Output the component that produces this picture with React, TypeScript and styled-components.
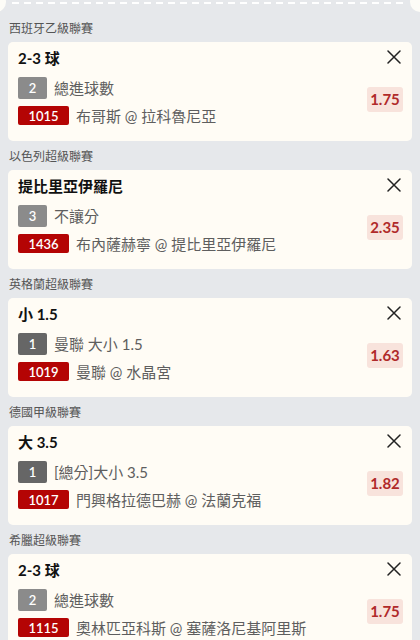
import React from "react";
import styled, { createGlobalStyle } from "styled-components";

const GlobalStyle = createGlobalStyle`
  html, body { margin: 0; padding: 0; background: #e6e8eb; }
  body { font-family: Lato, "Noto Sans CJK TC", sans-serif; }
  * { box-sizing: border-box; }
`;

const Page = styled.div`
  width: 420px;
  min-height: 640px;
  background: #e6e8eb;
  overflow: hidden;
`;

const Ticket = styled.div`
  position: relative;
  height: 11px;
  &::before, &::after {
    content: "";
    position: absolute;
    width: 20px;
    height: 20px;
    border-radius: 50%;
    background: #fdfcf7;
    top: -10px;
  }
  &::before { left: -14px; }
  &::after { right: -10px; }
`;

const Dashes = styled.div`
  margin: 2px 12px 0 12px;
  height: 2px;
  background: repeating-linear-gradient(90deg, #ffffff 0 7px, transparent 7px 12px);
`;

const List = styled.div`
  padding: 0 8px;
`;

const League = styled.div`
  font-family: "Noto Sans CJK TC", sans-serif;
  font-size: 12px;
  line-height: 16px;
  color: #555;
  padding: 7px 0 6px 1px;
`;

const Card = styled.div`
  background: #fffcf5;
  border-radius: 5px;
  padding: 5px 9px 12px 10px;
  height: 99px;
`;

const Head = styled.div`
  display: flex;
  align-items: center;
  justify-content: space-between;
  height: 20px;
`;

const Title = styled.div`
  font-family: Lato, "Noto Sans CJK TC", sans-serif;
  font-weight: 700;
  font-size: 15px;
  color: #111;
`;

const Close = styled.button`
  border: 0;
  background: transparent;
  padding: 0;
  width: 16px;
  height: 16px;
  display: flex;
  align-items: center;
  justify-content: center;
  margin-right: 1px;
  margin-top: -1px;
`;

const Body = styled.div`
  display: flex;
  align-items: center;
  justify-content: space-between;
  margin-top: 9px;
`;

const Lines = styled.div`
  display: flex;
  flex-direction: column;
  gap: 7px;
`;

const Line = styled.div<{ $h: number }>`
  display: flex;
  align-items: center;
  gap: 7px;
  height: ${(p) => p.$h}px;
`;

const Badge = styled.span<{ $bg: string; $w: number; $h: number }>`
  display: inline-flex;
  align-items: center;
  justify-content: center;
  width: ${(p) => p.$w}px;
  height: ${(p) => p.$h}px;
  background: ${(p) => p.$bg};
  color: #fff;
  font-family: Lato, sans-serif;
  font-size: 13px;
  font-weight: 600;
  border-radius: 2px;
`;

const LineText = styled.span`
  font-family: Lato, "Noto Sans CJK TC", sans-serif;
  font-size: 15px;
  color: #5e5e5e;
  white-space: nowrap;
`;

const Odds = styled.div`
  width: 36px;
  height: 25px;
  border-radius: 3px;
  background: #f8e3dc;
  color: #b02a2a;
  font-family: Lato, sans-serif;
  font-weight: 700;
  font-size: 15px;
  display: flex;
  align-items: center;
  justify-content: center;
  margin-top: -3px;
`;

type Bet = {
  league: string;
  title: string;
  num: string;
  numColor: string;
  market: string;
  code: string;
  match: string;
  odds: string;
};

const bets: Bet[] = [
  { league: "西班牙乙級聯賽", title: "2-3 球", num: "2", numColor: "#8b8b8b", market: "總進球數", code: "1015", match: "布哥斯 @ 拉科魯尼亞", odds: "1.75" },
  { league: "以色列超級聯賽", title: "提比里亞伊羅尼", num: "3", numColor: "#8b8b8b", market: "不讓分", code: "1436", match: "布內薩赫寧 @ 提比里亞伊羅尼", odds: "2.35" },
  { league: "英格蘭超級聯賽", title: "小 1.5", num: "1", numColor: "#666666", market: "曼聯 大小 1.5", code: "1019", match: "曼聯 @ 水晶宮", odds: "1.63" },
  { league: "德國甲級聯賽", title: "大 3.5", num: "1", numColor: "#666666", market: "[總分]大小 3.5", code: "1017", match: "門興格拉德巴赫 @ 法蘭克福", odds: "1.82" },
  { league: "希臘超級聯賽", title: "2-3 球", num: "2", numColor: "#8b8b8b", market: "總進球數", code: "1115", match: "奧林匹亞科斯 @ 塞薩洛尼基阿里斯", odds: "1.75" },
];

const XIcon = () => (
  <svg width="14" height="14" viewBox="0 0 14 14" fill="none">
    <path d="M1 1L13 13M13 1L1 13" stroke="#222" strokeWidth="1.5" strokeLinecap="round" />
  </svg>
);

export default function App() {
  return (
    <Page>
      <GlobalStyle />
      <Ticket>
        <Dashes />
      </Ticket>
      <List>
        {bets.map((b, i) => (
          <div key={i}>
            <League>{b.league}</League>
            <Card>
              <Head>
                <Title>{b.title}</Title>
                <Close aria-label="remove">
                  <XIcon />
                </Close>
              </Head>
              <Body>
                <Lines>
                  <Line $h={23}>
                    <Badge $bg={b.numColor} $w={29} $h={22}>{b.num}</Badge>
                    <LineText>{b.market}</LineText>
                  </Line>
                  <Line $h={19}>
                    <Badge $bg="#b40404" $w={51} $h={19}>{b.code}</Badge>
                    <LineText>{b.match}</LineText>
                  </Line>
                </Lines>
                <Odds>{b.odds}</Odds>
              </Body>
            </Card>
          </div>
        ))}
      </List>
    </Page>
  );
}
